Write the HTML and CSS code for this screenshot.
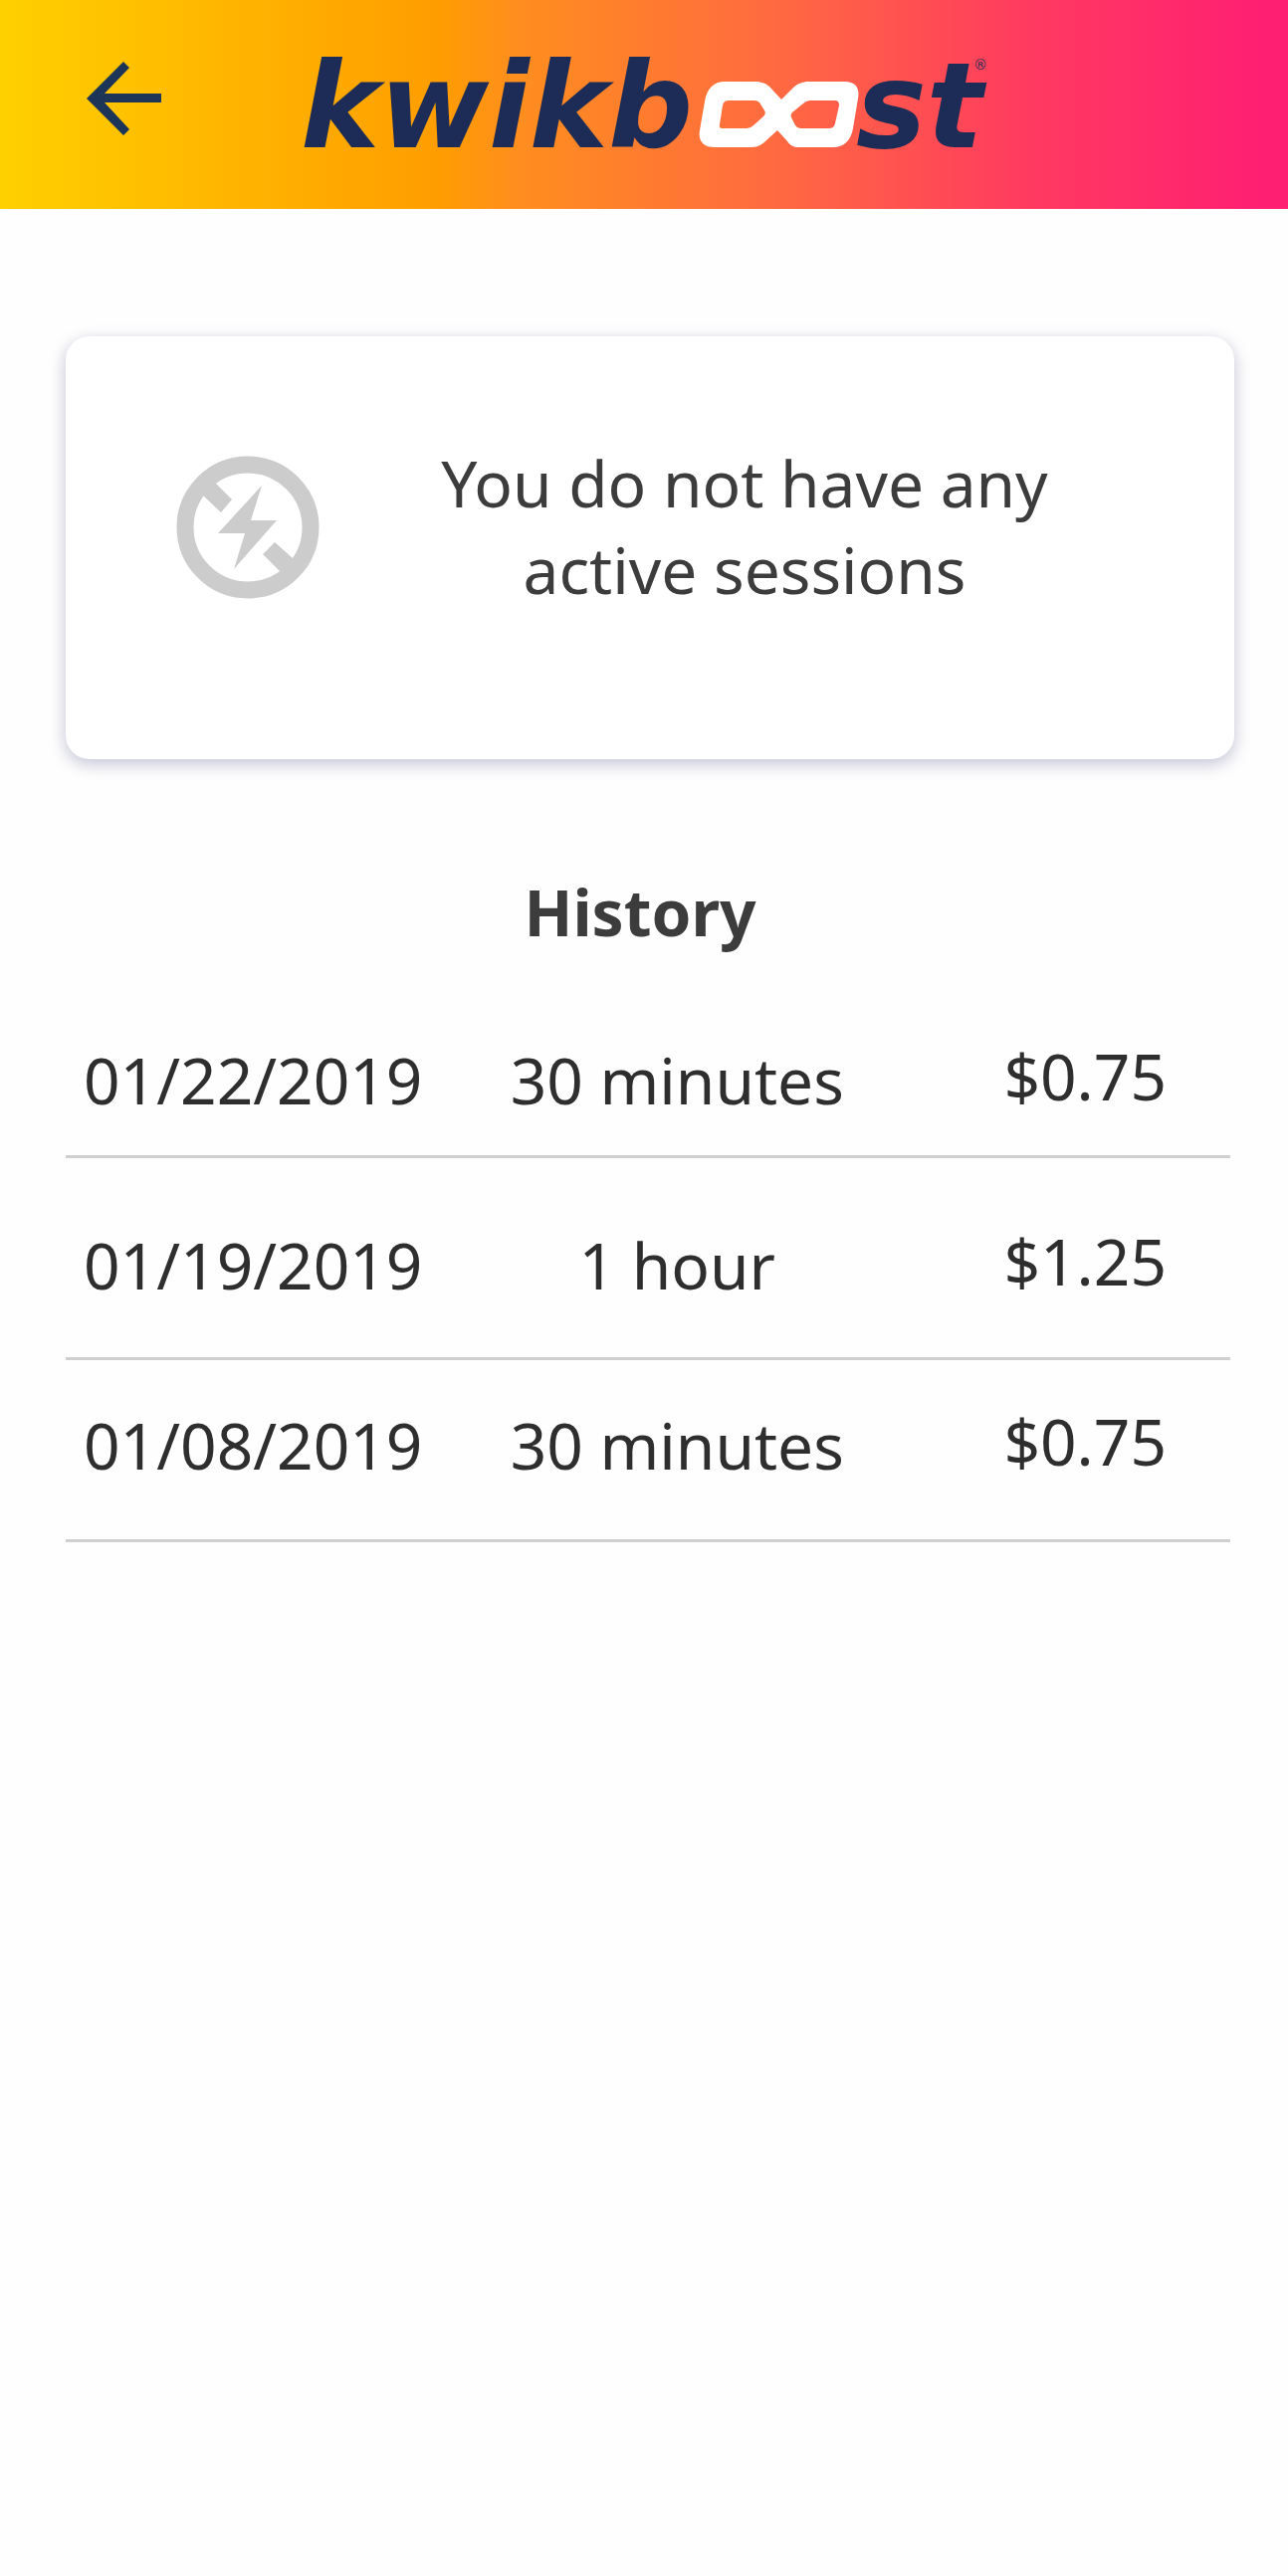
FILE: index.html
```html
<!DOCTYPE html>
<html lang="en">
<head>
  <meta charset="utf-8">
  <meta name="viewport" content="width=device-width, initial-scale=1">
  <title>kwikboost – Sessions</title>
  <link rel="stylesheet" href="styles.css">
</head>
<body>
  <header class="header">
    <button class="back" type="button" aria-label="Back">
      <svg width="75" height="74" viewBox="0 0 75 74" aria-hidden="true">
        <path fill="#1d3557" d="M0 37 37 0l6 6-25 26h57v9H18l25 27-6 6z"/>
      </svg>
    </button>
    <svg class="logo" width="686" height="88" viewBox="0 0 686 88" role="img" aria-label="kwikboost">
      <text class="logo-text" x="-2" y="87">kwikb</text>
      <path fill="#fff" fill-rule="evenodd" d="M424 21h31c7 0 11 2 15 6l11 12 11-11c5-5 10-7 17-7h36c11 0 15 7 13 17l-5 30c-2 12-9 19-20 19h-34c-6 0-9-2-12-6l-10-11-11 10c-5 5-9 7-15 7h-37c-11 0-17-6-15-17l5-29c2-13 9-20 20-20zM428 40q-5 0-6 5l-3 19q-1 4 3 4h24q4 0 7-3l10-9q3-3 1-6l-5-8q-2-2-5-2zM510 40q-4 0-7 3l-11 9q-2 2-1 5l4 8q2 3 6 3h28q5 0 6-5l4-18q0-5-4-5z"/>
      <text class="logo-text" x="556" y="87">st</text>
      <text class="logo-mark" x="674" y="9">®</text>
    </svg>
  </header>

  <main class="content">
    <section class="card">
      <svg class="card-icon" width="144" height="144" viewBox="0 0 144 144" aria-hidden="true">
        <circle cx="72" cy="72" r="63" fill="none" stroke="#ccc" stroke-width="17"/>
        <path fill="#ccc" d="M86 30 75 65h26l-43 49 11-36H42zM40 28l16 16-11 13-18-17-5-10 10-8zM99 87 87 99l17 17 9 5 9-9-5-9z"/>
      </svg>
      <p class="card-text">You do not have any<br>active sessions</p>
    </section>

    <h1 class="title">History</h1>

    <table class="history">
      <tbody>
        <tr><td>01/22/2019</td><td>30 minutes</td><td>$0.75</td></tr>
        <tr><td>01/19/2019</td><td>1 hour</td><td>$1.25</td></tr>
        <tr><td>01/08/2019</td><td>30 minutes</td><td>$0.75</td></tr>
      </tbody>
    </table>
  </main>
</body>
</html>
```
FILE: styles.css
```css
* {
  box-sizing: border-box;
}

body {
  margin: 0;
  background: #fefefe;
  color: #3c3c3c;
  font-family: "Noto Sans", "Open Sans", sans-serif;
  font-size: 64px;
  line-height: 87px;
}

.header {
  display: grid;
  grid-template-columns: 1fr auto 1fr;
  align-items: center;
  height: 210px;
  padding: 0 87px;
  background: linear-gradient(90deg, #ffd000 0%, #ff9d00 34%, #ff8e1e 40%, #ff6a40 60%, #ff3a60 80%, #ff1f72 98%);
}

.back {
  justify-self: start;
  padding: 0 0 12px;
  border: 0;
  background: none;
  cursor: pointer;
}

.back svg,
.logo {
  display: block;
}

.logo {
  overflow: visible;
}

.logo-text {
  fill: #1d2c56;
  font: italic bold 119px "DejaVu Sans", sans-serif;
}

.logo-mark {
  fill: #1d2c56;
  font: 14px "DejaVu Sans", sans-serif;
}

.content {
  padding: 128px 54px 0 66px;
}

.card {
  display: flex;
  align-items: flex-start;
  min-height: 425px;
  padding: 104px 111px;
  border-radius: 24px;
  background: #fff;
  box-shadow: 0 5px 16px 1px #c8c8d8;
}

.card-icon {
  flex: none;
  margin-top: 16px;
}

.card-text {
  flex: 1;
  margin: 0 0 0 46px;
  text-align: center;
}

.title {
  margin: 110px 20px 0 0;
  font-size: inherit;
  font-weight: 700;
  text-align: center;
}

.history {
  width: calc(100% - 4px);
  margin-top: 78px;
  border-collapse: collapse;
  table-layout: fixed;
  color: #2e2e2e;
}

.history td {
  width: 35%;
  padding: 4px 0 32px;
  border-bottom: 3px solid #d0d0d0;
  text-align: center;
  vertical-align: top;
}

.history tr:nth-child(2) td {
  padding-top: 64px;
  padding-bottom: 49px;
}

.history tr:nth-child(3) td {
  padding-top: 42px;
  padding-bottom: 51px;
}

.history td:first-child {
  padding-left: 18px;
  text-align: left;
}

/* Prices sit slightly above the other columns */
.history td:last-child {
  width: 30%;
  padding-right: 64px;
  line-height: 79px;
  text-align: right;
}
```
